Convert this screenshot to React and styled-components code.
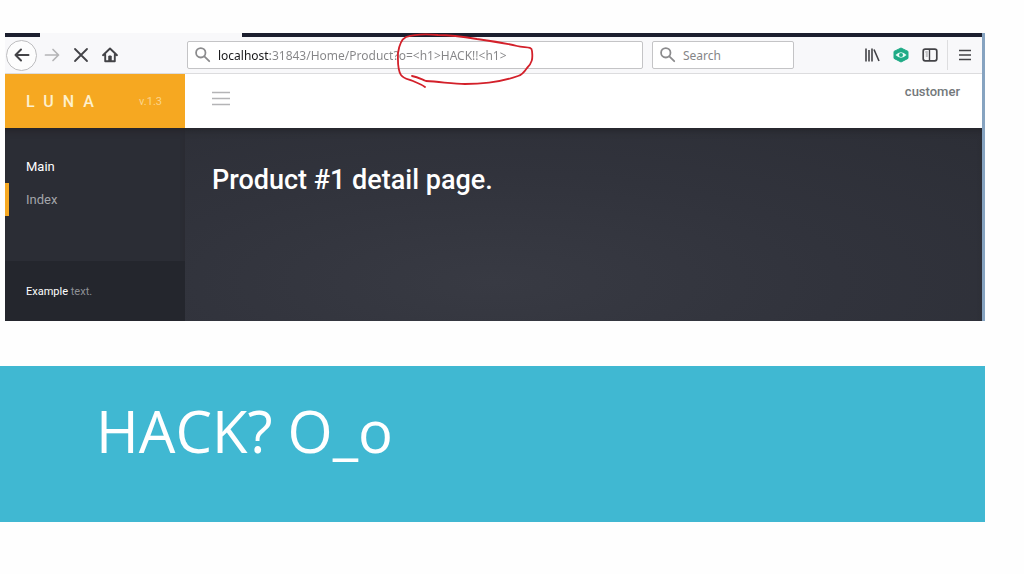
import React from "react";
import styled, { createGlobalStyle } from "styled-components";

const GlobalStyle = createGlobalStyle`
  *, *::before, *::after { box-sizing: border-box; }
  body { margin: 0; background: #fefefe; }
  button, input { font: inherit; }
  h1, h2, p, ul { margin: 0; padding: 0; }
`;

const uiFont = `"Open Sans", "Noto Sans", sans-serif`;
const fieldFont = `"Noto Sans", "Open Sans", sans-serif`;
const appFont = `Roboto, "Liberation Sans", sans-serif`;

const Slide = styled.main`
  display: flex;
  flex-direction: column;
  gap: 45px;
  padding: 33px 39px 52px 0;
`;

const BrowserWindow = styled.section`
  margin-left: 5px;
  border-right: 3px solid #86a3c0;
  background: #fff;
`;

const TabStrip = styled.div`
  display: grid;
  grid-template-columns: 35px 202px 1fr;
  height: 4px;
  background: #1c1f2f;
`;

const ActiveTab = styled.div`
  grid-column: 2;
  background: #f8f8fa;
`;

const Toolbar = styled.div`
  display: flex;
  align-items: center;
  height: 37px;
  padding: 0 3px 0 1px;
  background: #f8f8fa;
  border-bottom: 1px solid #dcdcde;
`;

const NavGroup = styled.nav`
  display: flex;
  align-items: center;
  margin-right: 63px;
`;

const IconButton = styled.button`
  display: flex;
  align-items: center;
  justify-content: center;
  flex: none;
  width: ${(p) => (p.$round ? 31 : 29)}px;
  height: ${(p) => (p.$round ? 31 : 29)}px;
  padding: 0;
  border: ${(p) => (p.$round ? "1px solid #bdbdbf" : "0")};
  border-radius: ${(p) => (p.$round ? "50%" : "2px")};
  background: ${(p) => (p.$round ? "#fdfdfd" : "transparent")};
  color: ${(p) => (p.$muted ? "#b4b4b6" : "#434347")};
  svg { display: block; }
`;

const Field = styled.label`
  position: relative;
  display: flex;
  align-items: center;
  gap: 7px;
  flex: ${(p) => (p.$grow ? "1 1 0" : "0 0 142px")};
  min-width: 0;
  height: 28px;
  margin-right: ${(p) => (p.$grow ? 9 : 63)}px;
  padding: 0 7px;
  border: 1px solid #c4c4c6;
  border-radius: 2px;
  background: #fff;
  color: #8b8b8d;
  svg { flex: none; }
`;

const TextInput = styled.input`
  flex: 1;
  min-width: 0;
  height: 24px;
  padding: 0;
  border: 0;
  outline: 0;
  background: transparent;
  color: #858587;
  font-family: ${fieldFont};
  font-size: 12px;
  &::placeholder { color: #858587; opacity: 1; }
`;

const AddressInput = styled(TextInput)`
  background: linear-gradient(to right, #18181a 52px, #858587 52px);
  background-clip: text;
  -webkit-text-fill-color: transparent;
`;

const PenMark = styled.svg`
  position: absolute;
  left: 205px;
  top: -9px;
  pointer-events: none;
`;

const Divider = styled.span`
  width: 1px;
  height: 30px;
  margin: 0 2px 0 3px;
  background: #dddddf;
`;

const AppHeader = styled.header`
  display: flex;
  height: 54px;
  font-family: ${appFont};
`;

const Brand = styled.div`
  display: flex;
  align-items: center;
  justify-content: space-between;
  width: 180px;
  padding: 0 23px 0 21px;
  background: #f6a821;
`;

const BrandName = styled.a`
  color: #fdf0cd;
  font-size: 16px;
  font-weight: 500;
  letter-spacing: 9px;
  text-decoration: none;
`;

const Version = styled.span`
  color: #fbd58d;
  font-size: 11px;
`;

const HeaderBar = styled.div`
  display: flex;
  flex: 1;
  align-items: flex-start;
  justify-content: space-between;
  padding: 10px 22px 0 21px;
`;

const UserName = styled.span`
  color: #73787b;
  font-size: 13px;
  font-weight: 500;
  line-height: 16px;
`;

const AppBody = styled.div`
  display: flex;
  min-height: 193px;
  font-family: ${appFont};
  background: radial-gradient(ellipse at 50% 80%, #383a43 0%, #31333c 50%, #2c2e36 100%);
  box-shadow: inset 0 6px 6px -3px #25262c;
`;

const Sidebar = styled.aside`
  display: flex;
  flex-direction: column;
  width: 180px;
  background: #2b2d35;
  box-shadow: inset 0 6px 6px -3px #25242a;
`;

const Menu = styled.ul`
  flex: 1;
  padding-top: 23px;
  list-style: none;
`;

const MenuTitle = styled.li`
  padding-left: 21px;
  color: #fff;
  font-size: 13px;
  line-height: 32px;
`;

const MenuLink = styled.a`
  display: block;
  padding-left: 17px;
  border-left: 4px solid #f6a821;
  color: #a3a5aa;
  font-size: 13px;
  line-height: 33px;
  text-decoration: none;
`;

const SideNote = styled.p`
  padding: 20px 21px 18px;
  background: #24262d;
  color: #8e9095;
  font-size: 11px;
  line-height: 22px;
  b { color: #fff; font-weight: 400; }
`;

const Content = styled.div`
  flex: 1;
  padding: 34px 27px;
`;

const PageTitle = styled.h2`
  color: #fff;
  font-size: 27px;
  font-weight: 500;
  line-height: 36px;
`;

const Banner = styled.section`
  height: 156px;
  padding: 26px 96px;
  background: #40b8d2;
`;

const BannerTitle = styled.h1`
  color: #fff;
  font-family: ${uiFont};
  font-size: 58px;
  font-weight: 400;
  line-height: 78px;
`;

const Stroke = ({ size = 18, width = 2, children }) => (
  <svg width={size} height={size} viewBox="0 0 18 18" fill="none" stroke="currentColor"
    strokeWidth={width} strokeLinecap="round" strokeLinejoin="round" aria-hidden="true">
    {children}
  </svg>
);

const SearchIcon = () => (
  <Stroke size={16}>
    <circle cx="6.5" cy="6.5" r="5.3" />
    <path d="M10.5 10.5 16 16" />
  </Stroke>
);

export default function App() {
  return (
    <>
      <GlobalStyle />
      <Slide>
        <BrowserWindow>
          <TabStrip><ActiveTab /></TabStrip>
          <Toolbar>
            <NavGroup aria-label="Browser">
              <IconButton $round aria-label="Back">
                <Stroke><path d="M15.5 9H2.5M8 3.5 2.5 9 8 14.5" /></Stroke>
              </IconButton>
              <IconButton $muted aria-label="Forward">
                <Stroke width={1.7}><path d="M2.5 9H15.5M10 3.5 15.5 9 10 14.5" /></Stroke>
              </IconButton>
              <IconButton aria-label="Stop">
                <Stroke width={1.8}><path d="M3 3 15 15M15 3 3 15" /></Stroke>
              </IconButton>
              <IconButton aria-label="Home">
                <Stroke width={1.9}>
                  <path d="M2 9.2 9 2.5 16 9.2M4.2 8.5V15.3H13.8V8.5" />
                  <path d="M7.8 15V10H10.2V15Z" fill="currentColor" strokeWidth="1" />
                </Stroke>
              </IconButton>
            </NavGroup>
            <Field $grow>
              <SearchIcon />
              <AddressInput
                aria-label="Address"
                spellCheck={false}
                defaultValue="localhost:31843/Home/Product?o=<h1>HACK!!<h1>"
              />
              <PenMark width="144" height="56" viewBox="0 0 144 56" fill="none" stroke="#d3202a"
                strokeWidth="1.8" strokeLinecap="round" strokeLinejoin="round" aria-hidden="true">
                <path d="M32 54C28 51 24 50 20 48C15 46 11 46 8 42C4 36 5 26 5 20C6 13 9 6 13 4C22 1 33 1 45 2C60 2 72 4 84 6C98 8 112 10 124 13C132 15 139 13 139 18C140 26 139 30 134 35C132 38 129 42 125 43C111 48 91 51 72 51C61 51 49 49 33 48C28 46 25 44 19 43" />
              </PenMark>
            </Field>
            <Field>
              <SearchIcon />
              <TextInput aria-label="Search" placeholder="Search" />
            </Field>
            <IconButton aria-label="Library">
              <svg width="16" height="16" viewBox="0 0 16 16" fill="none" stroke="currentColor"
                strokeWidth="1.6" aria-hidden="true">
                <path d="M2 1.5V14.5M5 3V14.5M8 1.5V14.5M10 2.5 15 14" />
              </svg>
            </IconButton>
            <IconButton aria-label="Privacy shield">
              <svg width="16" height="16" viewBox="0 0 16 16" aria-hidden="true">
                <path d="M8 1 15 4.4V11.4L8 15 1 11.4V4.4Z" fill="#1fab86" stroke="#1fab86" strokeLinejoin="round" />
                <path d="M2.5 8Q8 2.6 13.5 8Q8 13.4 2.5 8Z" fill="#e8fbf5" />
                <circle cx="8" cy="8" r="2" fill="#1fab86" />
              </svg>
            </IconButton>
            <IconButton aria-label="Sidebars">
              <svg width="16" height="16" viewBox="0 0 16 16" fill="none" stroke="currentColor" aria-hidden="true">
                <rect x="1.2" y="2.2" width="13.6" height="11.6" rx="2" strokeWidth="1.7" />
                <path d="M7.5 2.5V13.5" strokeWidth="1.4" />
                <path d="M3.3 5H5.8M3.8 7H5.8M3.8 9H5.8" strokeWidth="1" opacity=".6" />
              </svg>
            </IconButton>
            <Divider />
            <IconButton aria-label="Open menu">
              <svg width="12" height="12" viewBox="0 0 12 12" fill="none" stroke="currentColor"
                strokeWidth="1.7" aria-hidden="true">
                <path d="M0 1.5H12M0 6H12M0 10.5H12" />
              </svg>
            </IconButton>
          </Toolbar>
          <AppHeader>
            <Brand>
              <BrandName href="#">LUNA</BrandName>
              <Version>v.1.3</Version>
            </Brand>
            <HeaderBar>
              <IconButton $muted aria-label="Toggle navigation">
                <svg width="18" height="15" viewBox="0 0 18 15" fill="none" stroke="currentColor"
                  strokeWidth="1.4" aria-hidden="true">
                  <path d="M0 1.5H18M0 7.5H18M0 13.5H18" />
                </svg>
              </IconButton>
              <UserName>customer</UserName>
            </HeaderBar>
          </AppHeader>
          <AppBody>
            <Sidebar>
              <Menu>
                <MenuTitle>Main</MenuTitle>
                <li><MenuLink href="#">Index</MenuLink></li>
              </Menu>
              <SideNote><b>Example</b> text.</SideNote>
            </Sidebar>
            <Content>
              <PageTitle>Product #1 detail page.</PageTitle>
            </Content>
          </AppBody>
        </BrowserWindow>
        <Banner>
          <BannerTitle>HACK? O_o</BannerTitle>
        </Banner>
      </Slide>
    </>
  );
}
